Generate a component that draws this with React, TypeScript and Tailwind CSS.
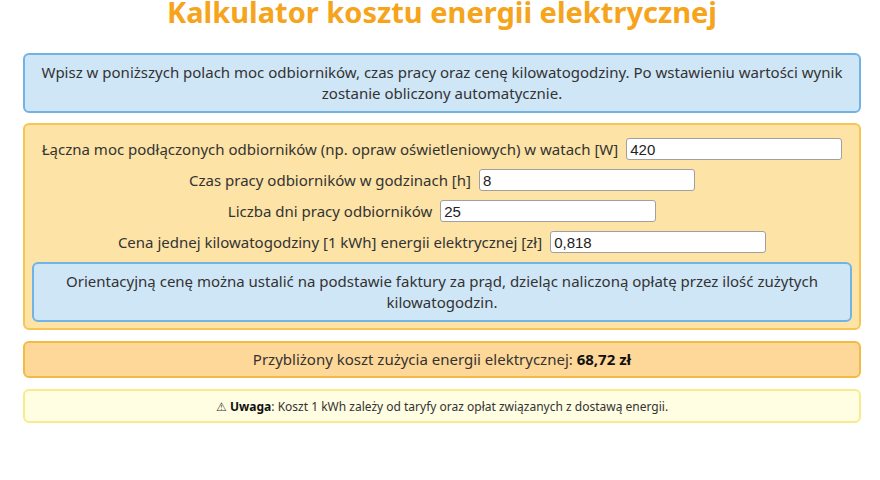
import React from "react";

type Field = { label: string; value: string };

const fields: Field[] = [
  { label: "Łączna moc podłączonych odbiorników (np. opraw oświetleniowych) w watach [W]", value: "420" },
  { label: "Czas pracy odbiorników w godzinach [h]", value: "8" },
  { label: "Liczba dni pracy odbiorników", value: "25" },
  { label: "Cena jednej kilowatogodziny [1 kWh] energii elektrycznej [zł]", value: "0,818" },
];

function FieldRow({ label, value }: Field) {
  return (
    <div className="flex items-center justify-center gap-[8px] h-[22px]">
      <label className="whitespace-nowrap">{label}</label>
      <input
        type="text"
        defaultValue={value}
        className="w-[216px] h-[22px] rounded-[3px] border border-[#a0a0a0] bg-white px-[3px] text-[15px] text-[#222] outline-none [font-family:'Liberation_Sans',Arial,sans-serif]"
      />
    </div>
  );
}

export default function App() {
  return (
    <div className="w-[880px] h-[480px] overflow-hidden bg-white text-[#333] text-[15px] leading-[21px] [font-family:'Noto_Sans',sans-serif]">
      <h1 className="mt-[-8px] pl-[4px] text-center text-[29px] leading-[40px] font-bold text-[#f5a41c]">
        Kalkulator kosztu energii elektrycznej
      </h1>
      <div className="pl-[23px] pr-[19px] mt-[21px] flex flex-col">
        <div className="rounded-[6px] border-2 border-[#72b3e6] bg-[#cfe6f7] px-[14px] py-[7px] text-center">
          Wpisz w poniższych polach moc odbiorników, czas pracy oraz cenę kilowatogodziny. Po wstawieniu wartości wynik
          zostanie obliczony automatycznie.
        </div>

        <div className="mt-[10px] rounded-[6px] border-2 border-[#f8c453] bg-[#fde3a6] px-[7px] pt-[13px] pb-[6px] flex flex-col gap-[9px]">
          {fields.map((f) => (
            <FieldRow key={f.label} {...f} />
          ))}
          <div className="rounded-[6px] border-2 border-[#72b3e6] bg-[#cfe6f7] px-[14px] py-[7px] text-center">
            Orientacyjną cenę można ustalić na podstawie faktury za prąd, dzieląc naliczoną opłatę przez ilość zużytych
            kilowatogodzin.
          </div>
        </div>

        <div className="mt-[11px] h-[37px] rounded-[6px] border-2 border-[#f3bb45] bg-[#fdd898] flex items-center justify-center">
          <span>
            Przybliżony koszt zużycia energii elektrycznej: <b className="text-[#111]">68,72 zł</b>
          </span>
        </div>

        <div className="mt-[11px] h-[34px] rounded-[6px] border-2 border-[#faeb8a] bg-[#fffde2] flex items-center justify-center text-[12px]">
          <span>
            ⚠ <b className="text-[#111]">Uwaga</b>: Koszt 1 kWh zależy od taryfy oraz opłat związanych z dostawą energii.
          </span>
        </div>
      </div>
    </div>
  );
}
